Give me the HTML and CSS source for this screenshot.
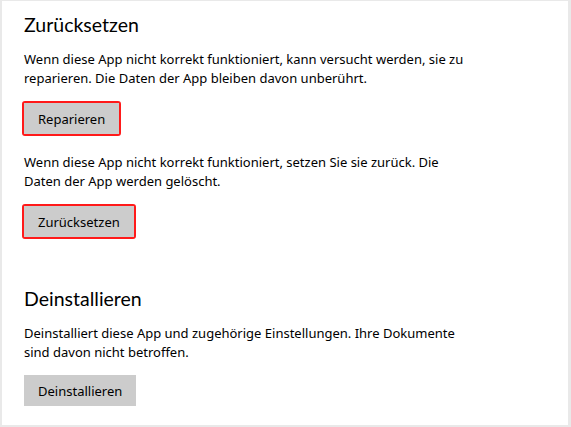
FILE: index.html
```html
<!DOCTYPE html>
<html lang="de">
<head>
  <meta charset="UTF-8">
  <title>App-Einstellungen</title>
  <link rel="stylesheet" href="styles.css">
</head>
<body>

<div class="page">
  <!-- Zurücksetzen -->
  <section class="group">
    <h2>Zurücksetzen</h2>
    <p>Wenn diese App nicht korrekt funktioniert, kann versucht werden, sie zu reparieren. Die Daten der App bleiben davon unberührt.</p>
    <span class="mark"><button type="button">Reparieren</button></span>
    <p>Wenn diese App nicht korrekt funktioniert, setzen Sie sie zurück. Die Daten der App werden gelöscht.</p>
    <span class="mark"><button type="button">Zurücksetzen</button></span>
  </section>

  <!-- Deinstallieren -->
  <section class="group second">
    <h2>Deinstallieren</h2>
    <p>Deinstalliert diese App und zugehörige Einstellungen. Ihre Dokumente sind davon nicht betroffen.</p>
    <button type="button">Deinstallieren</button>
  </section>
</div>

</body>
</html>
```

FILE: styles.css
```css
/* Grundlayout */
body {
  margin: 0;
  font-family: "Noto Sans", "Open Sans", sans-serif;
  color: #000000;
  background-color: #ffffff;
}

.page {
  box-sizing: border-box;
  height: 427px;
  border: 2px solid #e9e9e9;
  border-top-width: 1px;
  border-right-width: 3px;
  padding: 10px 0 0 22px;
}

.group {
  max-width: 450px;
}

.second {
  margin-top: 29px;
}

h2 {
  margin: 0 0 11px;
  font-family: Lato, "Noto Sans", sans-serif;
  font-size: 19.5px;
  font-weight: 400;
  line-height: 28px;
}

p {
  margin: 0 0 13px;
  font-size: 13px;
  line-height: 19px;
}

/* Schaltflächen */
button {
  display: block;
  padding: 0 14px;
  height: 31px;
  border: none;
  border-radius: 0;
  background-color: #cccccc;
  color: #000000;
  font-family: inherit;
  font-size: 13px;
  margin-bottom: 20px;
}

/* rote Hervorhebung */
.mark {
  display: inline-block;
  margin-left: -2px;
  border: 2px solid #ff1a1a;
  border-radius: 3px;
  margin-bottom: 17px;
}

.mark button {
  margin: 0;
}
```
